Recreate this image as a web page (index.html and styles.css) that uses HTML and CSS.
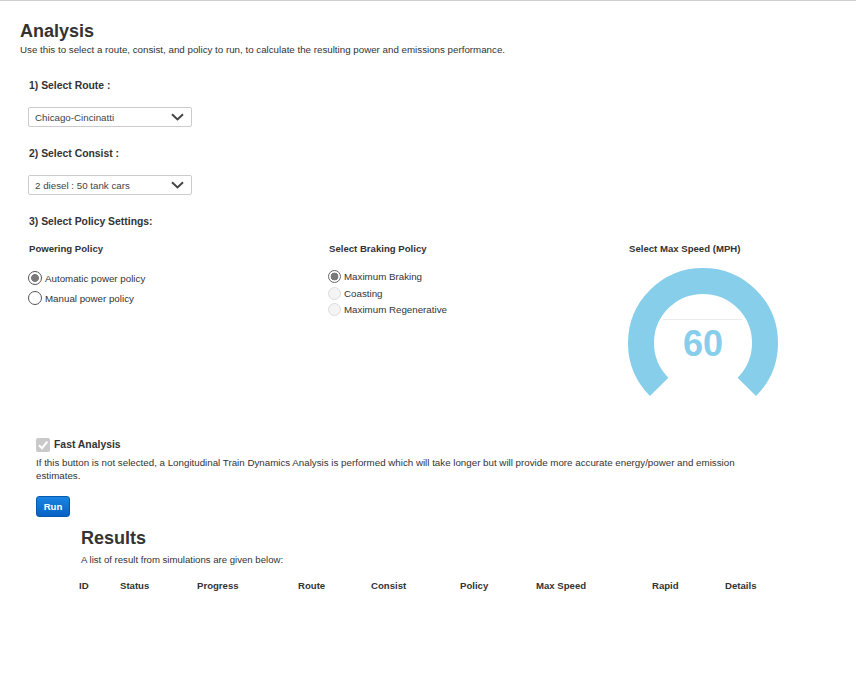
FILE: index.html
```html
<!DOCTYPE html>
<html lang="en">
<head>
    <meta charset="UTF-8">
    <meta name="viewport" content="width=device-width, initial-scale=1.0">
    <title>Analysis</title>
    <link rel="stylesheet" href="styles.css">
</head>
<body>
    <div class="page">
        <h1 class="title">Analysis</h1>
        <p class="intro">Use this to select a route, consist, and policy to run, to calculate the resulting power and emissions performance.</p>

        <div class="form">
            <div class="step">1) Select Route :</div>
            <div class="select">
                <span>Chicago-Cincinatti</span>
                <svg class="chevron" width="13" height="8" viewBox="0 0 13 8"><path d="M1 1.2 L6.5 6.4 L12 1.2" fill="none" stroke="#444" stroke-width="2"/></svg>
            </div>

            <div class="step">2) Select Consist :</div>
            <div class="select">
                <span>2 diesel : 50 tank cars</span>
                <svg class="chevron" width="13" height="8" viewBox="0 0 13 8"><path d="M1 1.2 L6.5 6.4 L12 1.2" fill="none" stroke="#444" stroke-width="2"/></svg>
            </div>

            <div class="step">3) Select Policy Settings:</div>
            <div class="policies">
                <div class="policy">
                    <div class="policy-title">Powering Policy</div>
                    <div class="options">
                        <label class="opt opt-lg"><input type="radio" name="power" checked> Automatic power policy</label>
                        <label class="opt opt-lg"><input type="radio" name="power"> Manual power policy</label>
                    </div>
                </div>
                <div class="policy">
                    <div class="policy-title">Select Braking Policy</div>
                    <div class="options">
                        <label class="opt opt-sm"><input type="radio" name="brake" checked> Maximum Braking</label>
                        <label class="opt opt-sm"><input type="radio" name="brake" disabled> Coasting</label>
                        <label class="opt opt-sm"><input type="radio" name="brake" disabled> Maximum Regenerative</label>
                    </div>
                </div>
                <div class="policy">
                    <div class="policy-title">Select Max Speed (MPH)</div>
                    <svg class="gauge" width="152" height="140" viewBox="0 0 152 140">
                        <path d="M32.16 119.84 A62 62 0 1 1 119.84 119.84" fill="none" stroke="#87ceeb" stroke-width="26"/>
                        <line x1="36" y1="52.5" x2="115" y2="52.5" stroke="#ececec" stroke-width="1"/>
                        <text x="76" y="89" text-anchor="middle" class="gauge-value">60</text>
                    </svg>
                </div>
            </div>
        </div>

        <div class="fast">
            <label class="check">
                <span class="box"><svg width="14" height="14" viewBox="0 0 14 14"><path d="M3 7.3 L6 10.2 L11.3 3.6" fill="none" stroke="#fff" stroke-width="2"/></svg></span>
                Fast Analysis
            </label>
            <p class="note">If this button is not selected, a Longitudinal Train Dynamics Analysis is performed which will take longer but will provide more accurate energy/power and emission estimates.</p>
            <button class="run">Run</button>
        </div>

        <div class="results">
            <h2>Results</h2>
            <p>A list of result from simulations are given below:</p>
            <div class="results-head">
                <span>ID</span>
                <span>Status</span>
                <span>Progress</span>
                <span>Route</span>
                <span>Consist</span>
                <span>Policy</span>
                <span>Max Speed</span>
                <span>Rapid</span>
                <span>Details</span>
            </div>
        </div>
    </div>
</body>
</html>
```

FILE: styles.css
```css
body {
    margin: 0;
    font-family: "Liberation Sans", Arial, sans-serif;
    color: #333;
    background: #fff;
}
.page {
    border-top: 1px solid #cfcfcf;
    padding: 0 20px;
    min-height: 677px;
}
.title {
    font-size: 18px;
    line-height: 22px;
    font-weight: bold;
    margin: 19px 0 0;
}
.intro {
    font-size: 9.75px;
    line-height: 14px;
    margin: 1px 0 0;
}
.form {
    padding-left: 9px;
    margin-top: 22px;
}
.step {
    font-size: 10.4px;
    line-height: 14px;
    font-weight: bold;
    margin-bottom: 14px;
}
.select {
    box-sizing: border-box;
    width: 164px;
    height: 20px;
    margin-left: -1px;
    margin-bottom: 20px;
    border: 1px solid #ccc;
    border-radius: 2px;
    display: flex;
    align-items: center;
    justify-content: space-between;
    padding: 0 7px 0 6px;
    font-size: 9.75px;
    color: #444;
}
.chevron {
    display: block;
}
.policies {
    display: grid;
    grid-template-columns: 300px 300px 1fr;
    margin-top: -1px;
}
.policy-title {
    font-size: 9.6px;
    line-height: 14px;
    font-weight: bold;
}
.options {
    margin-top: 12px;
}
.opt {
    display: flex;
    align-items: center;
    gap: 3px;
    font-size: 9.75px;
    color: #333;
}
.opt input {
    appearance: none;
    margin: 0 0 0 -1px;
    border-radius: 50%;
    background: #fff;
}
.opt-lg {
    height: 20px;
}
.opt-lg input {
    width: 14px;
    height: 14px;
    border: 1px solid #555;
}
.opt-sm {
    height: 16.8px;
}
.opt-sm input {
    width: 13px;
    height: 13px;
    border: 1px solid #666;
}
.opt input:checked {
    background: radial-gradient(circle, #7a7a7a 0 3.6px, #fff 4.2px);
}
.opt input:disabled {
    border-color: #dcdcdc;
    background: #f4f4f4;
}
.gauge {
    display: block;
    margin: 11px 0 0 -2px;
}
.gauge-value {
    font-family: "Liberation Sans", Arial, sans-serif;
    font-size: 36px;
    font-weight: bold;
    fill: #87ceeb;
}
.fast {
    margin: 30px 0 0 16px;
}
.check {
    display: flex;
    align-items: center;
    gap: 4px;
    height: 15px;
    font-size: 10.4px;
    font-weight: bold;
}
.box {
    width: 14px;
    height: 14px;
    background: #c9c9c9;
    border-radius: 2px;
    display: block;
}
.box svg {
    display: block;
}
.note {
    font-size: 9.75px;
    line-height: 13px;
    max-width: 720px;
    margin: 4px 0 0;
}
.run {
    margin-top: 14px;
    width: 34px;
    height: 21px;
    padding: 0;
    border: 1px solid #0759b0;
    border-radius: 3px;
    background: linear-gradient(#1b84e2, #0662c4);
    color: #fff;
    font-family: "Liberation Sans", Arial, sans-serif;
    font-size: 9.6px;
    font-weight: bold;
}
.results {
    margin-left: 61px;
}
.results h2 {
    font-size: 18px;
    line-height: 22px;
    font-weight: bold;
    margin: 10px 0 0;
}
.results p {
    font-size: 9.6px;
    line-height: 12px;
    margin: 5px 0 0;
}
.results-head {
    display: grid;
    grid-template-columns: 41px 77px 101px 73px 89px 76px 116px 73px 1fr;
    margin: 13px 0 0 -2px;
    font-size: 9.6px;
    line-height: 14px;
    font-weight: bold;
}
```
